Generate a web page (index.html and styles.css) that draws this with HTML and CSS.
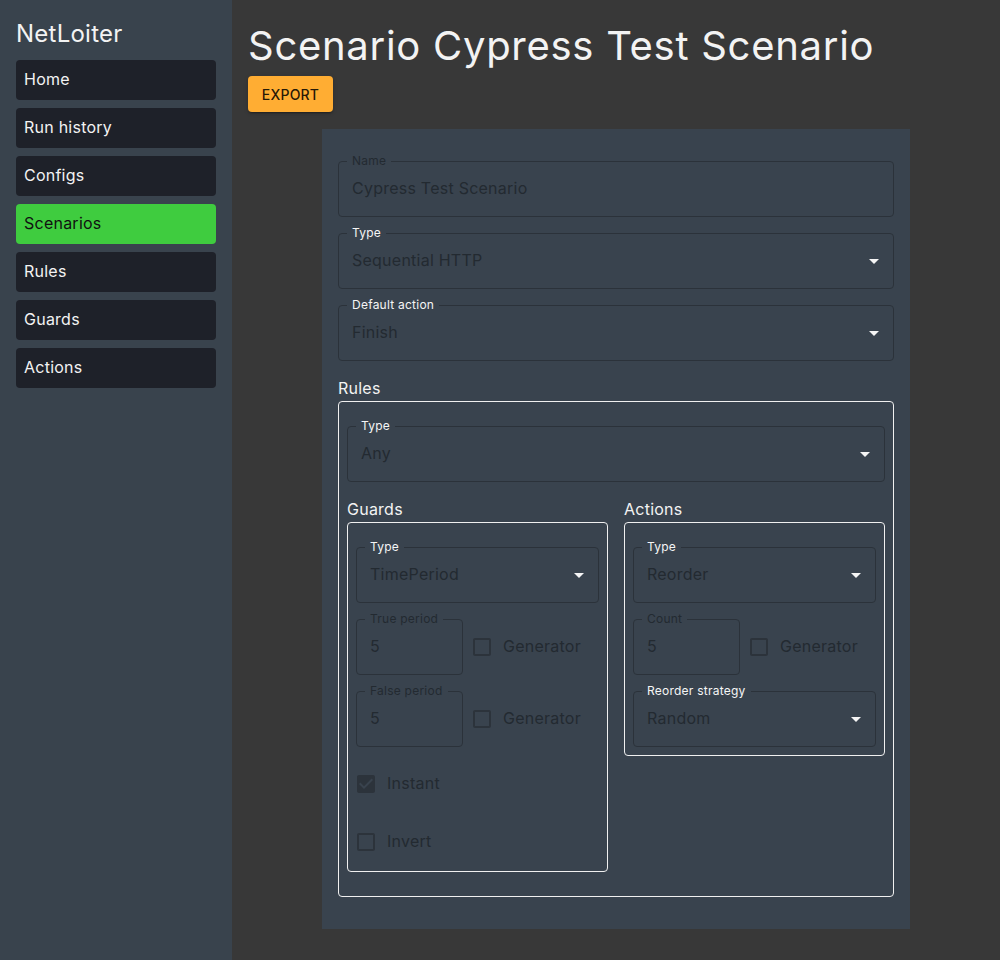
FILE: index.html
```html
<!DOCTYPE html>
<html lang="en">
<head>
<meta charset="utf-8">
<title>NetLoiter</title>
<link rel="stylesheet" href="styles.css">
</head>
<body>
<div class="app">
  <aside class="sidebar">
    <div class="brand">NetLoiter</div>
    <nav class="nav">
      <a class="nav-item">Home</a>
      <a class="nav-item">Run history</a>
      <a class="nav-item">Configs</a>
      <a class="nav-item active">Scenarios</a>
      <a class="nav-item">Rules</a>
      <a class="nav-item">Guards</a>
      <a class="nav-item">Actions</a>
    </nav>
  </aside>
  <main class="main">
    <h1 class="title">Scenario Cypress Test Scenario</h1>
    <button class="btn-export">Export</button>
    <section class="panel">
      <div class="field">
        <span class="field-label">Name</span>
        <span class="field-value">Cypress Test Scenario</span>
      </div>
      <div class="field">
        <span class="field-label on">Type</span>
        <span class="field-value">Sequential HTTP</span>
        <svg class="arrow" viewBox="0 0 24 24"><path d="M7 10l5 5 5-5z"/></svg>
      </div>
      <div class="field">
        <span class="field-label on">Default action</span>
        <span class="field-value">Finish</span>
        <svg class="arrow" viewBox="0 0 24 24"><path d="M7 10l5 5 5-5z"/></svg>
      </div>
      <div class="section">
        <h2 class="section-title">Rules</h2>
        <div class="group rules">
          <div class="field">
            <span class="field-label on">Type</span>
            <span class="field-value">Any</span>
            <svg class="arrow" viewBox="0 0 24 24"><path d="M7 10l5 5 5-5z"/></svg>
          </div>
          <div class="cols">
            <div class="section">
              <h3 class="section-title">Guards</h3>
              <div class="group stack">
                <div class="field">
                  <span class="field-label on">Type</span>
                  <span class="field-value">TimePeriod</span>
                  <svg class="arrow" viewBox="0 0 24 24"><path d="M7 10l5 5 5-5z"/></svg>
                </div>
                <div class="row">
                  <div class="field short">
                    <span class="field-label">True period</span>
                    <span class="field-value">5</span>
                  </div>
                  <label class="check">
                    <span class="check-box"><svg viewBox="0 0 24 24"><path d="M19 5v14H5V5h14m0-2H5c-1.1 0-2 .9-2 2v14c0 1.1.9 2 2 2h14c1.1 0 2-.9 2-2V5c0-1.1-.9-2-2-2z"/></svg></span>
                    <span class="check-text">Generator</span>
                  </label>
                </div>
                <div class="row">
                  <div class="field short">
                    <span class="field-label">False period</span>
                    <span class="field-value">5</span>
                  </div>
                  <label class="check">
                    <span class="check-box"><svg viewBox="0 0 24 24"><path d="M19 5v14H5V5h14m0-2H5c-1.1 0-2 .9-2 2v14c0 1.1.9 2 2 2h14c1.1 0 2-.9 2-2V5c0-1.1-.9-2-2-2z"/></svg></span>
                    <span class="check-text">Generator</span>
                  </label>
                </div>
                <label class="check">
                  <span class="check-box"><svg viewBox="0 0 24 24"><path d="M19 3H5c-1.11 0-2 .9-2 2v14c0 1.1.89 2 2 2h14c1.11 0 2-.9 2-2V5c0-1.1-.89-2-2-2zm-9 14l-5-5 1.41-1.41L10 14.17l7.59-7.59L19 8l-7 7z"/></svg></span>
                  <span class="check-text">Instant</span>
                </label>
                <label class="check">
                  <span class="check-box"><svg viewBox="0 0 24 24"><path d="M19 5v14H5V5h14m0-2H5c-1.1 0-2 .9-2 2v14c0 1.1.9 2 2 2h14c1.1 0 2-.9 2-2V5c0-1.1-.9-2-2-2z"/></svg></span>
                  <span class="check-text">Invert</span>
                </label>
              </div>
            </div>
            <div class="section">
              <h3 class="section-title">Actions</h3>
              <div class="group stack">
                <div class="field">
                  <span class="field-label on">Type</span>
                  <span class="field-value">Reorder</span>
                  <svg class="arrow" viewBox="0 0 24 24"><path d="M7 10l5 5 5-5z"/></svg>
                </div>
                <div class="row">
                  <div class="field short">
                    <span class="field-label">Count</span>
                    <span class="field-value">5</span>
                  </div>
                  <label class="check">
                    <span class="check-box"><svg viewBox="0 0 24 24"><path d="M19 5v14H5V5h14m0-2H5c-1.1 0-2 .9-2 2v14c0 1.1.9 2 2 2h14c1.1 0 2-.9 2-2V5c0-1.1-.9-2-2-2z"/></svg></span>
                    <span class="check-text">Generator</span>
                  </label>
                </div>
                <div class="field">
                  <span class="field-label on">Reorder strategy</span>
                  <span class="field-value">Random</span>
                  <svg class="arrow" viewBox="0 0 24 24"><path d="M7 10l5 5 5-5z"/></svg>
                </div>
              </div>
            </div>
          </div>
        </div>
      </div>
    </section>
  </main>
</div>
</body>
</html>
```
FILE: styles.css
```css
* { box-sizing: border-box; }
html, body { margin: 0; padding: 0; }
body {
  font-family: "Inter", "Liberation Sans", sans-serif;
  color: #f3f3f3;
  background: #383838;
  letter-spacing: 0.015em;
}
.app {
  display: flex;
  min-height: 960px;
}
.sidebar {
  width: 232px;
  flex: none;
  background: #39434d;
  padding: 16px;
}
.brand {
  font-size: 24px;
  line-height: 36px;
  color: #f3f3f3;
  margin-bottom: 8px;
}
.nav {
  display: flex;
  flex-direction: column;
  gap: 8px;
}
.nav-item {
  display: flex;
  align-items: center;
  height: 40px;
  padding: 0 8px 2px;
  border-radius: 4px;
  background: #1e2129;
  color: #f3f3f3;
  font-size: 16px;
}
.nav-item.active {
  background: #3fcc3f;
  color: #111;
}
.main {
  flex: 1;
  background: #383838;
  padding: 16px;
  display: flex;
  flex-direction: column;
  align-items: flex-start;
}
.title {
  margin: 0;
  font-size: 40px;
  line-height: 60px;
  font-weight: 400;
  letter-spacing: 0.018em;
  color: #f3f3f3;
}
.btn-export {
  font-family: inherit;
  height: 36px;
  width: 85px;
  padding: 0;
  border: none;
  border-radius: 4px;
  background: #ffad33;
  color: rgba(0,0,0,0.87);
  font-size: 14px;
  font-weight: 500;
  letter-spacing: 0.2px;
  text-transform: uppercase;
  box-shadow: 0 3px 1px -2px rgba(0,0,0,.2), 0 2px 2px 0 rgba(0,0,0,.14), 0 1px 5px 0 rgba(0,0,0,.12);
}
.panel {
  align-self: center;
  margin-top: 17px;
  width: 588px;
  background: #39434e;
  padding: 32px 16px;
  display: flex;
  flex-direction: column;
  gap: 16px;
}
.field {
  position: relative;
  height: 56px;
  border: 1px solid #2b323a;
  border-radius: 4px;
  display: flex;
  align-items: center;
  padding: 0 13px 2px;
}
.field.short { width: 107px; flex: none; }
.field-label {
  position: absolute;
  top: -9px;
  left: 8px;
  padding: 0 5px;
  background: #39434e;
  font-size: 12px;
  line-height: 16px;
  color: #232a31;
}
.field-label.on { color: #f5f5f5; }
.field-value {
  font-size: 16px;
  color: #232a31;
}
.arrow {
  position: absolute;
  right: 7px;
  top: 15px;
  width: 24px;
  height: 24px;
  fill: #f5f5f5;
}
.section { display: flex; flex-direction: column; }
.section-title {
  margin: 0;
  font-size: 16px;
  line-height: 22px;
  padding-bottom: 2px;
  font-weight: 400;
  color: #f3f3f3;
}
.group {
  border: 1px solid #f0f0f0;
  border-radius: 4px;
  padding: 24px 8px 8px;
}
.rules {
  padding: 24px 8px;
  display: flex;
  flex-direction: column;
  gap: 16px;
}
.cols {
  display: grid;
  grid-template-columns: 1fr 1fr;
  gap: 16px;
  align-items: start;
}
.stack {
  display: flex;
  flex-direction: column;
  gap: 16px;
}
.row {
  display: flex;
  align-items: center;
  gap: 9px;
}
.check {
  display: flex;
  align-items: center;
  margin-left: -11px;
}
.check-box {
  width: 42px;
  height: 42px;
  padding: 9px;
  flex: none;
}
.check-box svg {
  width: 24px;
  height: 24px;
  display: block;
  fill: #2c333b;
}
.check-text {
  font-size: 16px;
  color: #232a31;
  padding-bottom: 2px;
}
```
